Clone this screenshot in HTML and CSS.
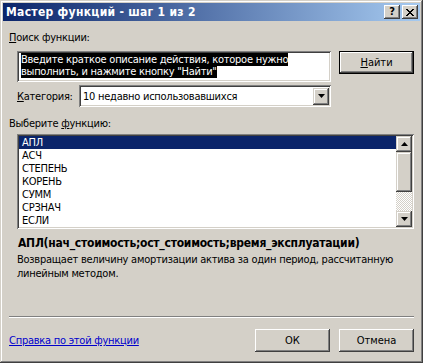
FILE: index.html
```html
<!DOCTYPE html>
<html lang="ru">
<head>
  <meta charset="UTF-8" />
  <title>Мастер функций - шаг 1 из 2</title>
  <link rel="stylesheet" href="styles.css">
</head>
<body>
  <div class="window">
    <div class="titlebar">
      <span class="title">Мастер функций - шаг 1 из 2</span>
      <span class="tb-btn help">?</span>
      <span class="tb-btn close">
        <svg width="8" height="7" viewBox="0 0 8 7"><path d="M0 0h2v1h1v1h2v-1h1v-1h2v1h-1v1h-1v1h-1v1h1v1h1v1h1v1h-2v-1h-1v-1h-2v1h-1v1h-2v-1h1v-1h1v-1h1v-1h-1v-1h-1v-1h-1z" fill="#000"/></svg>
      </span>
    </div>

    <div class="dialog">
      <div class="label first"><u>П</u>оиск функции:</div>
      <div class="search-row">
        <div class="field search">
          <span class="sel">Введите краткое описание действия, которое нужно</span><br>
          <span class="sel">выполнить, и нажмите кнопку "Найти"</span>
        </div>
        <button class="btn default"><u>Н</u>айти</button>
      </div>

      <div class="category-row">
        <span class="cat-label"><u>К</u>атегория:</span>
        <div class="field combo">
          <span class="combo-text">10 недавно использовавшихся</span>
          <span class="drop">
            <svg width="7" height="4" viewBox="0 0 7 4"><path d="M0 0h7l-3.5 4z" fill="#000"/></svg>
          </span>
        </div>
      </div>

      <div class="label">Выберите <u>ф</u>ункцию:</div>
      <div class="field list">
        <ul class="items">
          <li class="selected">АПЛ</li>
          <li>АСЧ</li>
          <li>СТЕПЕНЬ</li>
          <li>КОРЕНЬ</li>
          <li>СУММ</li>
          <li>СРЗНАЧ</li>
          <li>ЕСЛИ</li>
        </ul>
        <div class="scrollbar">
          <span class="sb-btn">
            <svg width="7" height="4" viewBox="0 0 7 4"><path d="M3.5 0l3.5 4h-7z" fill="#000"/></svg>
          </span>
          <span class="sb-thumb"></span>
          <span class="sb-track"></span>
          <span class="sb-btn">
            <svg width="7" height="4" viewBox="0 0 7 4"><path d="M0 0h7l-3.5 4z" fill="#000"/></svg>
          </span>
        </div>
      </div>

      <div class="signature">АПЛ(нач_стоимость;ост_стоимость;время_эксплуатации)</div>
      <p class="description">Возвращает величину амортизации актива за один период, рассчитанную линейным методом.</p>

      <div class="separator"></div>

      <div class="footer">
        <a href="#" class="help-link">Справка по этой функции</a>
        <div class="footer-buttons">
          <button class="btn">ОК</button>
          <button class="btn">Отмена</button>
        </div>
      </div>
    </div>
  </div>
</body>
</html>
```

FILE: styles.css
```css
body {
  margin: 0;
  background: #d4d0c8;
  font-family: "DejaVu Sans", "Liberation Sans", sans-serif;
  font-stretch: condensed;
  font-size: 11px;
  letter-spacing: -0.25px;
  color: #000;
}

u {
  text-decoration: underline;
  text-underline-offset: 1px;
}

.window {
  width: 423px;
  height: 363px;
  box-sizing: border-box;
  padding: 3px;
  background: #d4d0c8;
  display: flex;
  flex-direction: column;
  box-shadow: inset -1px -1px #404040, inset 1px 1px #d4d0c8,
              inset -2px -2px #808080, inset 2px 2px #fff;
}

/* title bar */
.titlebar {
  height: 18px;
  display: flex;
  align-items: center;
  padding: 0 2px 0 3px;
  background: linear-gradient(90deg, #0a246a, #a6caf0);
}

.title {
  flex: 1;
  color: #fff;
  font-weight: bold;
  font-size: 12px;
  letter-spacing: 0.3px;
}

.tb-btn {
  width: 16px;
  height: 14px;
  box-sizing: border-box;
  margin-left: 2px;
  display: flex;
  align-items: center;
  justify-content: center;
  background: #d4d0c8;
  font-weight: bold;
  font-size: 11px;
  line-height: 14px;
  letter-spacing: 0;
  box-shadow: inset -1px -1px #404040, inset 1px 1px #fff,
              inset -2px -2px #808080, inset 2px 2px #d4d0c8;
}

.close svg {
  display: block;
}

/* dialog body */
.dialog {
  flex: 1;
  display: flex;
  flex-direction: column;
  padding: 0 6px 8px 6px;
}

.label {
  line-height: 13px;
}

.label.first {
  margin-top: 10px;
}

.field {
  background: #fff;
  box-sizing: border-box;
  box-shadow: inset 1px 1px #808080, inset -1px -1px #fff,
              inset 2px 2px #404040, inset -2px -2px #d4d0c8;
}

.search-row {
  display: flex;
  gap: 8px;
  margin: 7px 0 0 8px;
}

.search {
  width: 314px;
  height: 31px;
  padding: 3px 4px;
  line-height: 12px;
}

.sel {
  background: #000;
  color: #fff;
}

.btn {
  width: 75px;
  height: 23px;
  border: none;
  padding: 0;
  background: #d4d0c8;
  font: inherit;
  color: #000;
  box-shadow: inset -1px -1px #404040, inset 1px 1px #fff,
              inset -2px -2px #808080, inset 2px 2px #d4d0c8;
}

.btn.default {
  box-shadow: inset 0 0 0 1px #000, inset -2px -2px #404040, inset 2px 2px #fff,
              inset -3px -3px #808080;
}

.category-row {
  display: flex;
  align-items: center;
  margin: 3px 0 0 8px;
}

.cat-label {
  width: 62px;
}

.combo {
  width: 252px;
  height: 22px;
  display: flex;
  align-items: center;
  padding: 2px 2px 2px 4px;
}

.combo-text {
  flex: 1;
}

.drop {
  width: 16px;
  height: 17px;
  display: flex;
  align-items: center;
  justify-content: center;
  background: #d4d0c8;
  box-shadow: inset -1px -1px #404040, inset 1px 1px #d4d0c8,
              inset -2px -2px #808080, inset 2px 2px #fff;
}

.category-row + .label {
  margin-top: 10px;
}

.list {
  width: 397px;
  height: 95px;
  margin: 4px 0 0 8px;
  padding: 2px;
  display: flex;
  overflow: hidden;
}

.items {
  list-style: none;
  margin: 0;
  padding: 0;
  flex: 1;
}

.items li {
  height: 13px;
  line-height: 13px;
  padding-left: 3px;
}

.items li.selected {
  background: #0a246a;
  color: #fff;
}

.scrollbar {
  width: 16px;
  display: flex;
  flex-direction: column;
}

.sb-btn,
.sb-thumb {
  height: 16px;
  display: flex;
  align-items: center;
  justify-content: center;
  background: #d4d0c8;
  box-shadow: inset -1px -1px #404040, inset 1px 1px #d4d0c8,
              inset -2px -2px #808080, inset 2px 2px #fff;
}

.sb-thumb {
  height: 40px;
}

.sb-track {
  flex: 1;
  background-color: #d4d0c8;
  background-image: conic-gradient(#fff 25%, #d4d0c8 0 50%, #fff 0 75%, #d4d0c8 0);
  background-size: 2px 2px;
}

.signature {
  margin: 7px 0 0 9px;
  font-weight: bold;
  font-size: 12px;
  line-height: 14px;
}

.description {
  margin: 3px 0 0 8px;
  line-height: 14px;
  width: 395px;
}

.separator {
  margin-top: auto;
  border-top: 1px solid #808080;
  border-bottom: 1px solid #fff;
  height: 0;
}

.footer {
  display: flex;
  align-items: center;
  justify-content: space-between;
  margin-top: 11px;
}

.help-link {
  color: #0000cc;
  text-decoration: underline;
}

.footer-buttons {
  display: flex;
  gap: 9px;
}
```
